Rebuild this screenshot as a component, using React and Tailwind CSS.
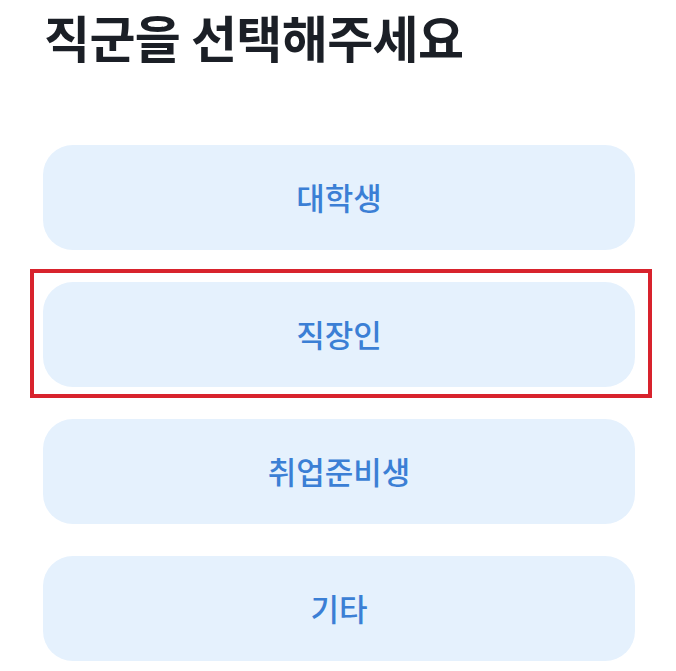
import React from "react";

const items = ["대학생", "직장인", "취업준비생", "기타"];

export default function App() {
  return (
    <div
      className="w-[676px] h-[671px] bg-white overflow-hidden"
      style={{ fontFamily: '"Noto Sans CJK KR", "Noto Sans", sans-serif' }}
    >
      <h1 className="pl-[44px] pt-0 text-[50px] leading-[73px] font-bold text-[#1b1f26] tracking-[-0.6px]">
        직군을 선택해주세요
      </h1>
      <div className="mt-[72px] pl-[43px] pr-[41px] flex flex-col gap-[32px]">
        {items.map((t, i) => (
          <div key={t} className="relative">
            <button className="w-full h-[105px] rounded-[30px] bg-[#e5f1fd] text-[#3b7fd5] text-[31px] font-medium flex items-center justify-center">
              {t}
            </button>
            {i === 1 && (
              <div className="absolute left-[-13px] right-[-17px] top-[-13px] bottom-[-11px] border-[4px] border-[#d8232d] pointer-events-none" />
            )}
          </div>
        ))}
      </div>
    </div>
  );
}
